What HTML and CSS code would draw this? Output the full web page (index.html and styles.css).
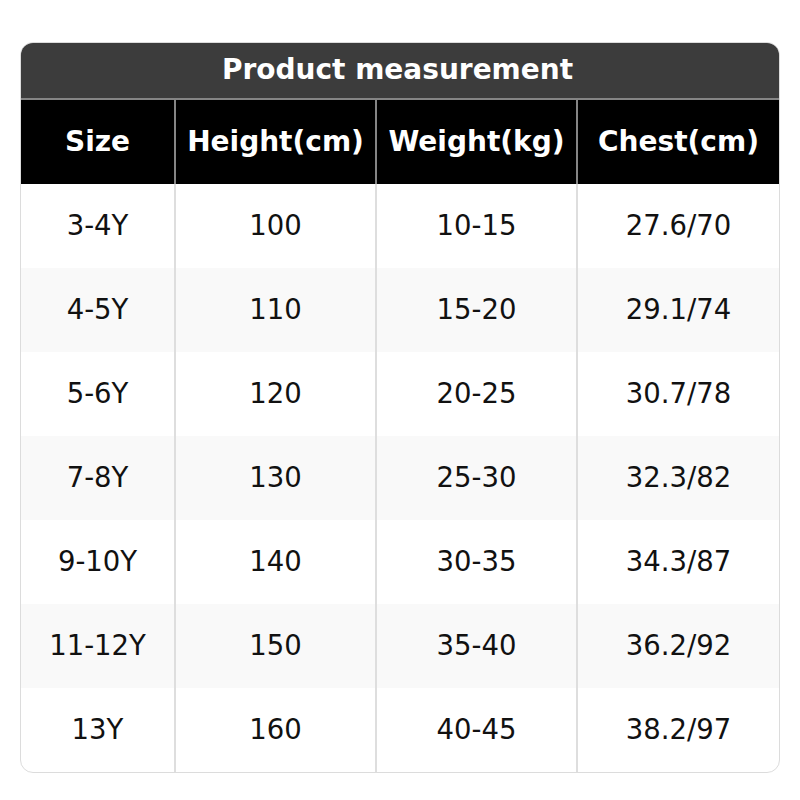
FILE: index.html
```html
<!DOCTYPE html>
<html>
<head>
<meta charset="utf-8">
<link rel="stylesheet" href="styles.css">
</head>
<body>
<div class="chart">
  <div class="title">Product measurement</div>
  <table class="grid">
    <colgroup>
      <col class="c1"><col class="c2"><col class="c3"><col class="c4">
    </colgroup>
    <thead>
      <tr><th>Size</th><th>Height(cm)</th><th>Weight(kg)</th><th>Chest(cm)</th></tr>
    </thead>
    <tbody>
      <tr><td>3-4Y</td><td>100</td><td>10-15</td><td>27.6/70</td></tr>
      <tr><td>4-5Y</td><td>110</td><td>15-20</td><td>29.1/74</td></tr>
      <tr><td>5-6Y</td><td>120</td><td>20-25</td><td>30.7/78</td></tr>
      <tr><td>7-8Y</td><td>130</td><td>25-30</td><td>32.3/82</td></tr>
      <tr><td>9-10Y</td><td>140</td><td>30-35</td><td>34.3/87</td></tr>
      <tr><td>11-12Y</td><td>150</td><td>35-40</td><td>36.2/92</td></tr>
      <tr><td>13Y</td><td>160</td><td>40-45</td><td>38.2/97</td></tr>
    </tbody>
  </table>
</div>
</body>
</html>
```
FILE: styles.css
```css
html, body {
  margin: 0;
  padding: 0;
  background: #ffffff;
}
body {
  font-family: "DejaVu Sans", "Liberation Sans", sans-serif;
}
.chart {
  margin: 42px 0 0 20px;
  width: 760px;
  box-sizing: border-box;
  border: 1px solid #dcdcdc;
  border-radius: 13px;
  overflow: hidden;
  background: #fff;
}
.title {
  height: 55px;
  padding-right: 5px;
  background: #3c3c3c;
  color: #fff;
  font-weight: bold;
  font-size: 28px;
  line-height: 53px;
  text-align: center;
  border-bottom: 2px solid #858585;
}
.grid {
  width: 758px;
  border-collapse: separate;
  border-spacing: 0;
  table-layout: fixed;
}
.c1 { width: 155px; }
.c2 { width: 201px; }
.c3 { width: 201px; }
.c4 { width: 201px; }
.grid th, .grid td {
  height: 84px;
  padding: 0 0 2px 0;
  text-align: center;
  vertical-align: middle;
  box-sizing: border-box;
  white-space: nowrap;
}
.grid th {
  background: #000;
  color: #fff;
  font-weight: bold;
  font-size: 28px;
  border-right: 2px solid #858585;
}
.grid td {
  color: #111;
  font-size: 27.5px;
  border-right: 2px solid #dedede;
}
.grid th:last-child, .grid td:last-child {
  border-right: none;
}
.grid tbody tr:nth-child(even) td {
  background: #f9f9f9;
}
```
